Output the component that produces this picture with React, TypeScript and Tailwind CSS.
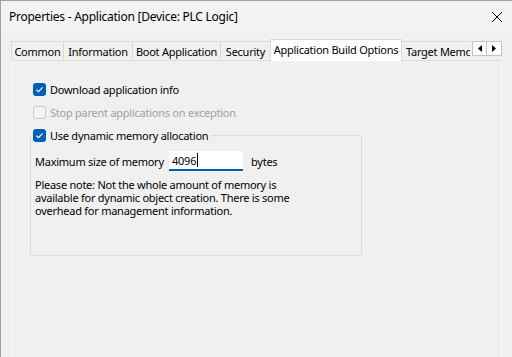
const font = { fontFamily: '"Noto Sans", "Open Sans", sans-serif' };

const CheckBox = ({ checked, disabled }: { checked?: boolean; disabled?: boolean }) => {
  if (checked) {
    return (
      <span className="flex h-[13px] w-[13px] shrink-0 items-center justify-center rounded-[3px] bg-[#005fb8]">
        <svg width="13" height="13" viewBox="0 0 13 13">
          <path d="M3.4 6.7 L5.5 8.7 L9.6 4.4" fill="none" stroke="#fff" strokeWidth="1.2" />
        </svg>
      </span>
    );
  }
  return (
    <span
      className={
        disabled
          ? 'h-[13px] w-[13px] shrink-0 rounded-[3px] border border-[#c8c8c8] bg-[#f5f5f5]'
          : 'h-[13px] w-[13px] shrink-0 rounded-[3px] border border-[#8a8a8a] bg-white'
      }
    />
  );
};

const tabs = [
  { label: 'Common', w: 'w-[52px]' },
  { label: 'Information', w: 'w-[69px]' },
  { label: 'Boot Application', w: 'w-[88px]' },
  { label: 'Security', w: 'w-[50px]' },
];

const App = () => {
  return (
    <div
      className="h-[357px] w-[512px] overflow-hidden whitespace-nowrap border-l border-t border-[#a0a0a0] bg-[#f0f0f0] text-[11px] tracking-[-0.25px] text-black"
      style={font}
    >
      {/* Title bar */}
      <div className="flex h-[31px] items-center justify-between bg-[#f3f3f3] pl-[8px] pr-[8px]">
        <span className="text-[12px] leading-none">Properties - Application [Device: PLC Logic]</span>
        <svg width="12" height="12" viewBox="0 0 12 12" className="mr-[1px]">
          <path d="M1 1 L11 11 M11 1 L1 11" stroke="#000" strokeWidth="1" />
        </svg>
      </div>

      {/* Tab strip */}
      <div className="mt-[7px] flex h-[21px] items-end pl-[10px]">
        {tabs.map((t) => (
          <div
            key={t.label}
            className={`flex h-[19px] ${t.w} items-center justify-center border-l border-t border-[#d9d9d9] leading-none`}
          >
            {t.label}
          </div>
        ))}
        <div className="relative z-10 mb-[-1px] flex h-[22px] w-[132px] items-start justify-center border-l border-r border-t border-[#d9d9d9] bg-white pt-[4px] leading-none">
          Application Build Options
        </div>
        <div className="flex h-[19px] w-[68px] items-center overflow-hidden border-t border-[#d9d9d9] pl-[4px] leading-none">
          Target Memory Settings
        </div>
        <div className="mb-[4px] ml-[2px] flex h-[15px]">
          <div className="flex w-[15px] items-center justify-center border border-[#c4c4c4] bg-[#fdfdfd]">
            <svg width="4" height="7" viewBox="0 0 4 7">
              <path d="M4 0 L0 3.5 L4 7 Z" fill="#000" />
            </svg>
          </div>
          <div className="flex w-[15px] items-center justify-center border-b border-r border-t border-[#c4c4c4] bg-[#fdfdfd]">
            <svg width="4" height="7" viewBox="0 0 4 7">
              <path d="M0 0 L4 3.5 L0 7 Z" fill="#000" />
            </svg>
          </div>
        </div>
      </div>

      {/* Tab panel */}
      <div className="ml-[10px] h-[300px] w-[491px] border border-b-0 border-[#dcdcdc] border-l-[#fafafa] border-r-[#fafafa] pl-[18px] pt-[22px]">
        <label className="ml-[3px] flex h-[13px] items-center gap-[4px]">
          <CheckBox checked />
          <span className="leading-none">Download application info</span>
        </label>
        <label className="ml-[3px] mt-[10px] flex h-[13px] items-center gap-[4px] text-[#a0a0a0]">
          <CheckBox disabled />
          <span className="leading-none">Stop parent applications on exception</span>
        </label>

        <fieldset className="mt-[10px] w-[332px] border border-[#dcdcdc] pb-[38px] pl-[2px]">
          <legend className="pr-[3px]">
            <span className="flex h-[13px] items-center gap-[4px]">
              <CheckBox checked />
              <span className="leading-none">Use dynamic memory allocation</span>
            </span>
          </legend>
          <div className="pl-[2px]">
            <div className="mt-[9px] flex h-[20px] items-center">
              <span className="w-[134px] leading-none">Maximum size of memory</span>
              <div className="flex h-[20px] w-[74px] items-center border-b-2 border-[#005fb8] bg-white pl-[3px]">
                <span className="leading-none">4096</span>
                <span className="ml-[1px] h-[14px] w-px bg-black" />
              </div>
              <span className="ml-[8px] leading-none">bytes</span>
            </div>
            <div className="mt-[7px] flex flex-col">
              <span className="h-[13px] leading-[13px]">Please note: Not the whole amount of memory is</span>
              <span className="h-[13px] leading-[13px]">available for dynamic object creation. There is some</span>
              <span className="h-[13px] leading-[13px]">overhead for management information.</span>
            </div>
          </div>
        </fieldset>
      </div>
    </div>
  );
};

export default App;
